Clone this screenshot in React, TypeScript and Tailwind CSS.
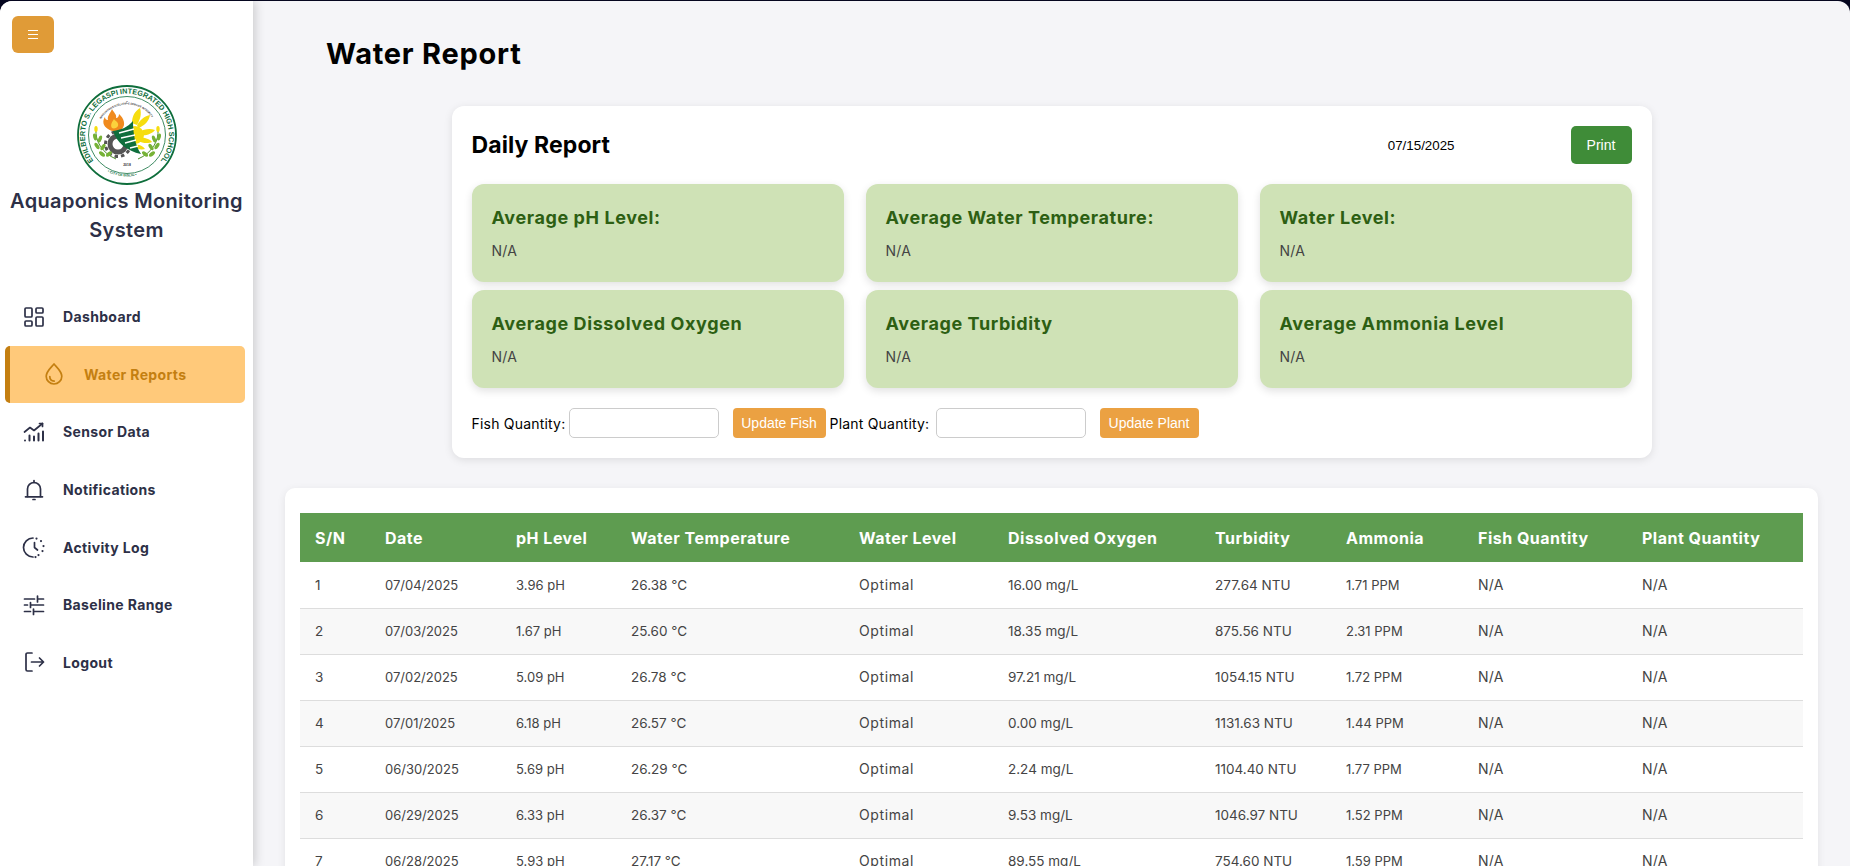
import { LayoutDashboard } from "lucide-react"

const rows = [
	["1", "07/04/2025", "3.96 pH", "26.38 °C", "Optimal", "16.00 mg/L", "277.64 NTU", "1.71 PPM"],
	["2", "07/03/2025", "1.67 pH", "25.60 °C", "Optimal", "18.35 mg/L", "875.56 NTU", "2.31 PPM"],
	["3", "07/02/2025", "5.09 pH", "26.78 °C", "Optimal", "97.21 mg/L", "1054.15 NTU", "1.72 PPM"],
	["4", "07/01/2025", "6.18 pH", "26.57 °C", "Optimal", "0.00 mg/L", "1131.63 NTU", "1.44 PPM"],
	["5", "06/30/2025", "5.69 pH", "26.29 °C", "Optimal", "2.24 mg/L", "1104.40 NTU", "1.77 PPM"],
	["6", "06/29/2025", "6.33 pH", "26.37 °C", "Optimal", "9.53 mg/L", "1046.97 NTU", "1.52 PPM"],
	["7", "06/28/2025", "5.93 pH", "27.17 °C", "Optimal", "89.55 mg/L", "754.60 NTU", "1.59 PPM"],
]

const stats = [
	"Average pH Level:",
	"Average Water Temperature:",
	"Water Level:",
	"Average Dissolved Oxygen",
	"Average Turbidity",
	"Average Ammonia Level",
]

// narrower digits than latin letters in the original font, so columns differ a bit
const cellText = [
	"text-[13.5px]",
	"text-[13px] pt-px",
	"text-[13px] pt-px",
	"text-[13.5px]",
	"text-[14px] tracking-[0.6px] pb-px",
	"text-[13.5px]",
	"text-[13.5px]",
	"text-[13px] pt-px",
]

const Logo = () => (
	<svg viewBox="0 0 100 100" className="w-[100px] h-[100px]">
		<circle cx="50" cy="50" r="49" fill="#fff" stroke="#0f6e3c" strokeWidth="1.8" />
		<circle cx="50" cy="50" r="38.500" fill="#fff" stroke="#0f6e3c" strokeWidth="0.8" />
		<defs>
			<path id="ring" d="M 16.500 76 A 42 42 0 1 1 83.500 76" fill="none" />
			<path id="ringInner" d="M 24 34 A 30.500 30.500 0 0 1 76 34" fill="none" />
			<path id="ringBottom" d="M 24 82.500 A 42 42 0 0 0 76 82.500" fill="none" />
		</defs>
		<text fontSize="7.400" fontWeight="700" fill="#0f6e3c" fontFamily="Liberation Sans, sans-serif">
			<textPath href="#ring" textLength="186" lengthAdjust="spacingAndGlyphs">EDILBERTO S. LEGASPI INTEGRATED HIGH SCHOOL</textPath>
		</text>
		<text fontSize="2.600" fontWeight="700" fill="#333" fontFamily="Liberation Sans, sans-serif">
			<textPath href="#ringInner" textLength="60">INNOVATION EXCELLENCE SERVICE INTEGRITY</textPath>
		</text>
		<text fontSize="3.400" fontWeight="700" fill="#0f6e3c" fontFamily="Liberation Sans, sans-serif">
			<textPath href="#ringBottom" startOffset="14%">• CITY OF BISLIG •</textPath>
		</text>
		{/* gear */}
		<circle cx="41" cy="59" r="8" fill="none" stroke="#555" strokeWidth="5" />
		<circle cx="41" cy="59" r="12.500" fill="none" stroke="#555" strokeWidth="3" strokeDasharray="3.500 3" />
		{/* sun leaves */}
		<path d="M55 38c0-7 3-12 8-15 2 6 0 12-3 17zM60 41c2-6 8-10 13-11-1 6-5 10-11 13zM62 47c5-3 11-4 16-2-3 4-9 6-15 5zM62 53c5-1 11 1 13 4-4 2-10 1-14-1zM58 60c4-1 8 1 10 4-4 1-8 0-11-2z" fill="#f6dd0f" />
		<circle cx="58" cy="50" r="9" fill="#f6dd0f" />
		{/* flame */}
		<path d="M31 44c-5-3-6-8-3-12 0 2 1 3 3 3-1-4 2-6 4-11 1 3 5 5 4 9 2 0 3-2 3-4 5 4 7 11 3 15-3 3-10 3-14 0z" fill="#f08a1d" />
		<path d="M35 43c-2-3 0-6 2-9 1 2 5 3 4 7-1 2-4 3-6 2z" fill="#fbd23c" />
		{/* horn */}
		<path d="M36 46c8-1 15-4 20-10 0 12 2 24 8 33-14-3-24-11-28-23z" fill="#0f6e3c" />
		<path d="M42 48l15-4M44 53l14-3M48 58l11-3M53 63l8-2" stroke="#fff" strokeWidth="1.300" />
		{/* laurels */}
		<path d="M19 44c-1 12 6 24 20 30M81 44c1 12-6 24-20 30" stroke="#4e8f2a" strokeWidth="1" fill="none" />
		<g fill="#76b236">
			<ellipse cx="18" cy="52" rx="1.800" ry="3.600" transform="rotate(-15 18 52)" />
			<ellipse cx="23" cy="54" rx="1.800" ry="3.600" transform="rotate(20 23 54)" />
			<ellipse cx="20" cy="61" rx="1.800" ry="3.600" transform="rotate(-35 20 61)" />
			<ellipse cx="26" cy="62" rx="1.800" ry="3.600" transform="rotate(35 26 62)" />
			<ellipse cx="25" cy="69" rx="1.800" ry="3.600" transform="rotate(-50 25 69)" />
			<ellipse cx="32" cy="69" rx="1.800" ry="3.600" transform="rotate(50 32 69)" />
			<ellipse cx="82" cy="52" rx="1.800" ry="3.600" transform="rotate(15 82 52)" />
			<ellipse cx="77" cy="54" rx="1.800" ry="3.600" transform="rotate(-20 77 54)" />
			<ellipse cx="80" cy="61" rx="1.800" ry="3.600" transform="rotate(35 80 61)" />
			<ellipse cx="74" cy="62" rx="1.800" ry="3.600" transform="rotate(-35 74 62)" />
			<ellipse cx="75" cy="69" rx="1.800" ry="3.600" transform="rotate(50 75 69)" />
			<ellipse cx="68" cy="69" rx="1.800" ry="3.600" transform="rotate(-50 68 69)" />
		</g>
		<ellipse cx="19" cy="44" rx="1.700" ry="3" fill="#f6dd0f" />
		<ellipse cx="81" cy="44" rx="1.700" ry="3" fill="#f6dd0f" />
		<text x="50" y="81" textAnchor="middle" fontSize="3.400" fontWeight="700" fill="#333" fontFamily="Liberation Sans, sans-serif">2018</text>
	</svg>
)

const iconProps = {
	width: 24,
	height: 24,
	viewBox: "0 0 24 24",
	fill: "none",
	stroke: "currentColor",
	strokeWidth: 1.7,
	strokeLinecap: "round" as const,
	strokeLinejoin: "round" as const,
}

const DropIcon = () => (
	<svg {...iconProps}>
		<path d="M12 2c3.200 3.800 7.800 7.600 7.800 12.200a7.800 7.800 0 0 1-15.600 0C4.200 9.600 8.800 5.800 12 2z" />
		<path d="M7.800 14.500c0 2.500 1.700 4.400 4.400 4.600" />
	</svg>
)
const SensorIcon = () => (
	<svg {...iconProps}>
		<path d="M2.500 12l5.500-4.500 4 3 8.500-7" />
		<path d="M17.500 3.500h3v3" />
		<path d="M3 20.500v-.1M7.500 20.500v-5M12 20.500v-4M16.500 20.500v-7M21 20.500v-9" strokeWidth="2" />
	</svg>
)
const BellIcon = () => (
	<svg {...iconProps}>
		<path d="M5.500 18.500V11a6.500 6.500 0 0 1 13 0v7.500" />
		<path d="M3.500 18.800h17" />
		<path d="M12 2.500v2M11 21.500h2" />
	</svg>
)
const ActivityIcon = () => (
	<svg {...iconProps}>
		<path d="M11 3a9.500 9.500 0 0 0 0 19" />
		<path d="M14.500 3.500v.1M19 6v.1M21.500 11v.1M20.500 16v.1M16.500 20v.1M13.500 22v.1" strokeWidth="2.200" />
		<path d="M12.500 7.500v5l3 2.500" />
	</svg>
)
const SlidersIcon = () => (
	<svg {...iconProps}>
		<path d="M2.500 6h10M15.500 3v6M15.500 6h6" />
		<path d="M2.500 12h3M8.500 9.500v5M8.500 12h13" />
		<path d="M2.500 18.500h6M11.500 16v5.500M11.500 18.500h10" />
	</svg>
)
const LogoutIcon = () => (
	<svg {...iconProps}>
		<path d="M10 3H5.500a1.500 1.500 0 0 0-1.500 1.500v15A1.500 1.500 0 0 0 5.500 21H10" />
		<path d="M9.500 12h12M17.500 8l4 4-4 4" />
	</svg>
)

const NavItem = ({ icon, label }: { icon: React.ReactNode; label: string }) => (
	<a className="h-[57.6px] flex items-center pl-[22px] gap-[17px] text-[#2d3047] text-[14px] font-bold tracking-[0.35px]">
		{icon}
		<span>{label}</span>
	</a>
)

const Th = ({ children, w }: { children: React.ReactNode; w: string }) => (
	<th className={`${w} pl-[15px] text-left font-bold text-[16px] tracking-[0.5px]`}>{children}</th>
)

export default function App() {
	return (
		<div className="h-screen overflow-hidden bg-[#05061f] pt-px font-['Inter',sans-serif]">
			<div className="h-full flex overflow-hidden rounded-t-[12px] bg-[#f5f5f8]">
				<aside className="w-[253px] shrink-0 bg-white shadow-[2px_0_10px_rgba(0,0,0,0.18)] z-10 flex flex-col">
					<button className="ml-3 mt-[15px] w-[42px] h-[37px] rounded-[6px] bg-[#e09b37] flex flex-col items-center justify-center gap-[3px]">
						<span className="w-[10px] h-px bg-white" />
						<span className="w-[10px] h-px bg-white" />
						<span className="w-[10px] h-px bg-white" />
					</button>
					<div className="mt-[32px] flex justify-center">
						<Logo />
					</div>
					<h2 className="mt-[2px] text-center text-[20px] leading-[29px] font-semibold text-[#2d3047] tracking-[0.35px]">
						Aquaponics Monitoring
						<br />
						System
					</h2>
					<nav className="mt-[43px] flex flex-col">
						<NavItem icon={<LayoutDashboard size={24} strokeWidth={1.7} />} label="Dashboard" />
						<a className="ml-[5px] w-[240px] h-[57.6px] flex items-center pl-[32px] gap-[18px] rounded-[5px] border-l-[5px] border-[#c47f11] bg-[#ffc97a] text-[#c47f11] text-[14px] font-bold tracking-[0.35px]">
							<DropIcon />
							<span>Water Reports</span>
						</a>
						<NavItem icon={<SensorIcon />} label="Sensor Data" />
						<NavItem icon={<BellIcon />} label="Notifications" />
						<NavItem icon={<ActivityIcon />} label="Activity Log" />
						<NavItem icon={<SlidersIcon />} label="Baseline Range" />
						<NavItem icon={<LogoutIcon />} label="Logout" />
					</nav>
				</aside>
				<main className="flex-1 min-w-0 px-8">
					<h1 className="ml-[41px] mt-[36px] text-[29px] leading-[34px] font-bold text-black tracking-[0.75px]">Water Report</h1>
					<section className="mt-[35px] mx-auto w-[1200px] h-[352px] bg-white rounded-[12px] shadow-[0_2px_8px_rgba(0,0,0,0.1)] px-5">
						<div className="h-[78px] flex items-center">
							<h3 className="pt-px text-[23px] font-bold text-black tracking-[0.1px]">Daily Report</h3>
							<span className="ml-auto mr-[116px] pt-px text-[13.33px] text-black font-['Liberation_Sans',sans-serif]">07/15/2025</span>
							<button className="w-[61px] h-[38px] rounded-[5px] bg-[#3f8c38] text-white text-[14px] font-['Liberation_Sans',sans-serif]">Print</button>
						</div>
						<div className="grid grid-cols-3 gap-x-[22px] gap-y-[8px]">
							{stats.map((s) => (
								<div key={s} className="h-[98px] rounded-[12px] bg-[#cfe2b6] px-5 pt-[22px] shadow-[0_3px_8px_rgba(0,0,0,0.12)]">
									<h4 className="text-[18px] leading-[24px] font-bold text-[#2d5f13] tracking-[0.6px]">{s}</h4>
									<p className="mt-[11px] text-[14px] leading-[20px] text-[#444] tracking-[0.2px]">N/A</p>
								</div>
							))}
						</div>
						<div className="mt-[20px] flex items-center text-[14px] text-black tracking-[0.2px]">
							<label className="w-[97px]">Fish Quantity:</label>
							<input className="w-[150px] h-[30px] rounded-[5px] border border-[#ccc] bg-white" />
							<button className="ml-[14px] w-[93px] h-[30px] rounded-[4px] bg-[#eba142] text-white text-[14px] tracking-normal font-['Liberation_Sans',sans-serif]">Update Fish</button>
							<label className="ml-1 w-[106px]">Plant Quantity:</label>
							<input className="w-[150px] h-[30px] rounded-[5px] border border-[#ccc] bg-white" />
							<button className="ml-[14px] w-[99px] h-[30px] rounded-[4px] bg-[#eba142] text-white text-[14px] tracking-normal font-['Liberation_Sans',sans-serif]">Update Plant</button>
						</div>
					</section>
					<section className="mt-[30px] bg-white rounded-[10px] shadow-[0_2px_8px_rgba(0,0,0,0.08)] px-[15px] pt-[25px] pb-8">
						<table className="w-full table-fixed border-collapse">
							<thead>
								<tr className="h-[49px] bg-[#5e9c50] text-white">
									<Th w="w-[70px]">S/N</Th>
									<Th w="w-[131px]">Date</Th>
									<Th w="w-[115px]">pH Level</Th>
									<Th w="w-[228px]">Water Temperature</Th>
									<Th w="w-[149px]">Water Level</Th>
									<Th w="w-[207px]">Dissolved Oxygen</Th>
									<Th w="w-[131px]">Turbidity</Th>
									<Th w="w-[132px]">Ammonia</Th>
									<Th w="w-[164px]">Fish Quantity</Th>
									<Th w="w-[176px]">Plant Quantity</Th>
								</tr>
							</thead>
							<tbody>
								{rows.map((r) => (
									<tr key={r[0]} className="h-[46px] border-b border-[#ddd] even:bg-[#f8f8f8] text-[#444]">
										{r.map((c, i) => (
											<td key={i} className={`pl-[15px] ${cellText[i]}`}>{c}</td>
										))}
										<td className="pl-[15px] pb-px text-[14px] tracking-[0.2px]">N/A</td>
										<td className="pl-[15px] pb-px text-[14px] tracking-[0.2px]">N/A</td>
									</tr>
								))}
							</tbody>
						</table>
					</section>
				</main>
			</div>
		</div>
	)
}
